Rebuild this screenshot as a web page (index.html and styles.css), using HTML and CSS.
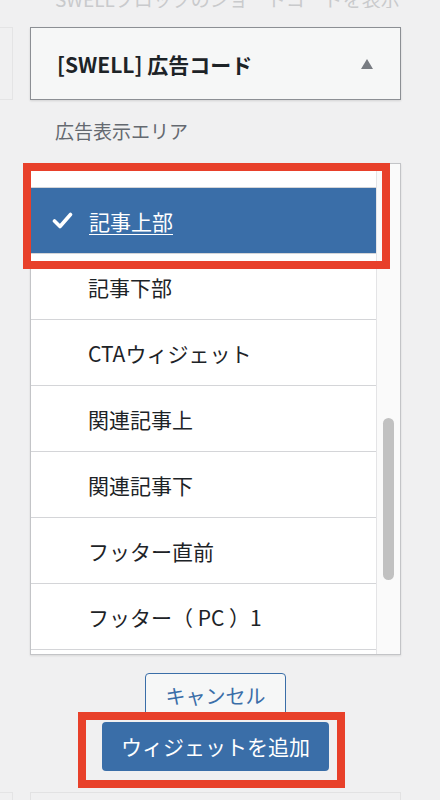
FILE: index.html
```html
<!DOCTYPE html>
<html lang="ja">
<head>
  <meta charset="UTF-8">
  <meta name="viewport" content="width=device-width, initial-scale=1.0">
  <title>ウィジェットを追加</title>
  <link rel="stylesheet" href="styles.css">
</head>
<body>
  <div class="page">
    <p class="faded-note"><span>SWELLブロックのショートコードを表示</span></p>

    <div class="widget-row">
      <div class="stub"></div>
      <div class="widget">
        <div class="widget-head">
          <h3>[SWELL] 広告コード</h3>
          <span class="arrow"></span>
        </div>

        <p class="area-label">広告表示エリア</p>

        <div class="area-list">
          <ul class="items">
            <li class="item partial"></li>
            <li class="item selected">
              <svg class="check" width="21" height="17" viewBox="0 0 21 17">
                <path d="M2.5 9 L8 14.5 L18.5 2.5" fill="none" stroke="#fff" stroke-width="3.6" stroke-linecap="round" stroke-linejoin="round"/>
              </svg>
              <span>記事上部</span>
            </li>
            <li class="item">記事下部</li>
            <li class="item">CTAウィジェット</li>
            <li class="item">関連記事上</li>
            <li class="item">関連記事下</li>
            <li class="item">フッター直前</li>
            <li class="item">フッター（ PC ）1</li>
          </ul>
          <div class="track"><div class="thumb"></div></div>
          <div class="mark mark-list"></div>
        </div>

        <div class="actions">
          <button class="btn-cancel">キャンセル</button>
          <div class="add-wrap">
            <button class="btn-add">ウィジェットを追加</button>
            <div class="mark mark-add"></div>
          </div>
        </div>
      </div>
    </div>

    <div class="widget-row next">
      <div class="stub"></div>
      <div class="widget next-box"></div>
    </div>
  </div>
</body>
</html>
```

FILE: styles.css
```css
body {
  margin: 0;
  background: #f0f0f1;
  font-family: "Noto Sans CJK JP", "Noto Sans", sans-serif;
  color: #1d2327;
  overflow: hidden;
}
.page {
  width: 440px;
  height: 800px;
  overflow: hidden;
}
.faded-note {
  margin: 0;
  height: 8px;
  overflow: hidden;
  padding-left: 55px;
}
.faded-note span {
  display: block;
  margin-top: -11px;
  font-size: 19px;
  line-height: 20px;
  color: #c9cacc;
  white-space: nowrap;
}
.widget-row {
  display: flex;
  gap: 17px;
  align-items: flex-start;
  margin-top: 19px;
}
.stub {
  width: 13px;
  height: 73px;
  box-sizing: border-box;
  border: 1px solid #e4e4e5;
  border-left: none;
  background: #f0f0f1;
}
.widget {
  width: 371px;
}
.widget-head {
  height: 73px;
  box-sizing: border-box;
  display: flex;
  align-items: center;
  justify-content: space-between;
  padding: 0 27px 0 26px;
  background: #f6f7f7;
  border: 1px solid #8c8f94;
  box-shadow: 0 1px 2px rgba(0, 0, 0, 0.12);
}
.widget-head h3 {
  margin: 0;
  font-size: 21px;
  font-weight: 700;
  color: #1d2327;
}
.arrow {
  width: 0;
  height: 0;
  border-left: 6px solid transparent;
  border-right: 6px solid transparent;
  border-bottom: 10px solid #787c82;
}
.area-label {
  margin: 19px 0 20px;
  padding-left: 25px;
  font-size: 19px;
  line-height: 24px;
  color: #646970;
}
.area-list {
  position: relative;
  display: flex;
  height: 492px;
  box-sizing: border-box;
  border: 1px solid #c3c4c7;
  background: #fff;
  box-shadow: 0 1px 2px rgba(0, 0, 0, 0.1);
}
.items {
  list-style: none;
  margin: 0;
  padding: 0;
  width: 345px;
  border-right: 1px solid #e4e4e6;
}
.item {
  height: 65px;
  border-bottom: 1px solid #d4d5d8;
  display: flex;
  align-items: center;
  padding-left: 57px;
  font-size: 21px;
  color: #1d2327;
}
.item.partial {
  height: 23px;
}
.item.selected {
  padding-left: 21px;
  gap: 16px;
  background: #3a6ea8;
  color: #fff;
}
.item.selected span {
  text-decoration: underline;
  text-underline-offset: 4px;
  text-decoration-thickness: 1px;
}
.track {
  flex: 1;
  background: #fafafa;
  position: relative;
}
.thumb {
  margin: 254px 0 0 6px;
  width: 11px;
  height: 162px;
  border-radius: 6px;
  background: #c1c1c1;
}
.mark {
  position: absolute;
  border: 8px solid #e8402a;
  box-sizing: border-box;
  pointer-events: none;
}
.mark-list {
  left: -8px;
  top: -1px;
  width: 367px;
  height: 106px;
}
.actions {
  display: flex;
  flex-direction: column;
  align-items: center;
  margin-top: 18px;
}
.btn-cancel {
  width: 141px;
  height: 47px;
  box-sizing: border-box;
  border: 1px solid #3a6ea8;
  border-radius: 4px;
  background: #f6f7f7;
  color: #3a6ea8;
  font-family: inherit;
  font-size: 20px;
  padding: 0 0 2px;
}
.add-wrap {
  position: relative;
  margin-top: 2px;
}
.btn-add {
  display: block;
  width: 227px;
  height: 49px;
  border: none;
  border-radius: 4px;
  background: #3a6ea8;
  color: #fff;
  font-family: inherit;
  font-size: 21px;
  padding: 0 0 2px;
}
.mark-add {
  left: -24px;
  top: -10px;
  right: -16px;
  bottom: -17px;
}
.widget-row.next {
  margin-top: 21px;
}
.next-box {
  height: 60px;
  box-sizing: border-box;
  border: 1px solid #e2e2e3;
  background: #f0f0f1;
}
```
